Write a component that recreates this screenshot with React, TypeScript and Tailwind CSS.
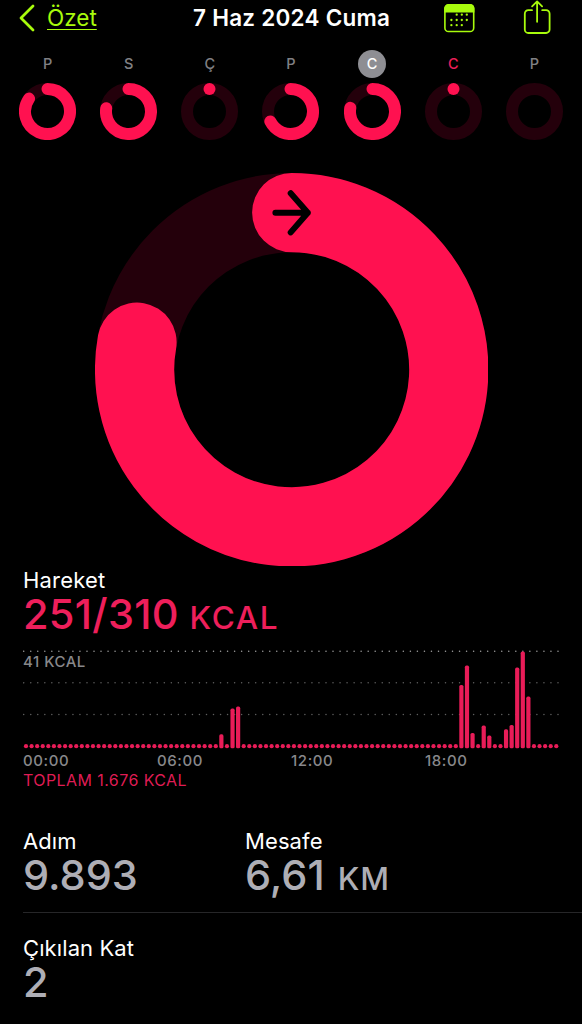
import { clsx } from 'clsx'

type Day = {
  letter: string
  /** Fraction of the move goal; null means nothing recorded yet */
  progress: number | null
  selected?: boolean
  today?: boolean
}

const DAYS: Day[] = [
  { letter: 'P', progress: 0.847 },
  { letter: 'S', progress: 0.773 },
  { letter: 'Ç', progress: 0 },
  { letter: 'P', progress: 0.677 },
  { letter: 'C', progress: 0.776, selected: true },
  { letter: 'C', progress: 0, today: true },
  { letter: 'P', progress: null },
]

// Quarter-hour slots with activity, slot index -> bar height
const BARS: Record<number, number> = {
  35: 14, 37: 39.7, 38: 41.7,
  78: 63.3, 79: 82.7, 80: 15.3, 82: 22.7, 83: 12.7,
  86: 19, 87: 23.3, 88: 80.7, 89: 96.7, 90: 51.7,
}

const HOURS = ['00:00', '06:00', '12:00', '18:00']

function Ring({ size, stroke, progress, className }: {
  size: number
  stroke: number
  progress: number | null
  className?: string
}) {
  const c = size / 2
  const r = (size - stroke) / 2
  const angle = (progress ?? 0) * Math.PI * 2
  const x = c + r * Math.sin(angle)
  const y = c - r * Math.cos(angle)

  return (
    <svg width={size} height={size} viewBox={`0 0 ${size} ${size}`} fill="none" className={className}>
      <circle cx={c} cy={c} r={r} stroke="#24000b" strokeWidth={stroke} />
      {progress === 0 && <circle cx={c} cy={c - r} r={stroke / 2} fill="#ff1150" />}
      {progress != null && progress > 0 && (
        <path
          d={`M${c} ${c - r}A${r} ${r} 0 ${progress > 0.5 ? 1 : 0} 1 ${x} ${y}`}
          stroke="#ff1150"
          strokeWidth={stroke}
          strokeLinecap="round"
        />
      )}
    </svg>
  )
}

function Header() {
  return (
    <header className="grid h-9 grid-cols-[193px_1fr_192px] items-center">
      <a className="flex items-center pl-[19px] text-[#a8fb0c]">
        <svg width="16" height="28" viewBox="0 0 16 28" fill="none" stroke="currentColor" strokeWidth="2.8" strokeLinecap="round" strokeLinejoin="round">
          <path d="M14 2L2 14L14 26" />
        </svg>
        <span className="ml-[12px] text-[22.5px] underline decoration-1 underline-offset-[3px]">Özet</span>
      </a>
      <h1 className="flex justify-center text-[22.5px] font-semibold tracking-[0.25px] whitespace-nowrap text-white">7 Haz 2024 Cuma</h1>
      <div className="flex items-start justify-end gap-[48px] self-start pr-[31px] text-[#a8fb0c]">
        <svg width="31" height="29" viewBox="0 0 31 29" fill="none" className="mt-[4px]">
          <rect x="0.9" y="0.9" width="28.8" height="26.6" rx="3.6" stroke="currentColor" strokeWidth="1.6" />
          <path d="M0.2 8.5V4.5A4.3 4.3 0 0 1 4.5 0.2H26.2A4.3 4.3 0 0 1 30.4 4.5V8.5Z" fill="currentColor" />
          <g fill="currentColor">
            {[[12.7, 10.7], [17.8, 10.7], [22.8, 10.7], [7.4, 16], [12.7, 16], [17.8, 16], [22.8, 16], [7.4, 21.2], [12.7, 21.2], [17.8, 21.2]].map(([x, y]) => (
              <circle key={`${x}-${y}`} cx={x} cy={y} r="1.15" />
            ))}
          </g>
        </svg>
        <svg width="28" height="35" viewBox="0 0 28 35" fill="none" stroke="currentColor" strokeWidth="1.8" strokeLinecap="round" strokeLinejoin="round">
          <path d="M9 10.2H5.3A3.5 3.5 0 0 0 1.8 13.7V29.5A3.5 3.5 0 0 0 5.3 33H23.1A3.5 3.5 0 0 0 26.6 29.5V13.7A3.5 3.5 0 0 0 23.1 10.2H19.2" />
          <path d="M14.1 21.8V1.6M9.1 6.4L14.1 1.4L19.1 6.4" />
        </svg>
      </div>
    </header>
  )
}

function WeekStrip() {
  return (
    <div className="mt-[14px] ml-[7px] grid w-[568px] grid-cols-7">
      {DAYS.map((day, i) => (
        <div key={i} className="flex flex-col items-center gap-[5px]">
          <span
            className={clsx(
              'flex size-7 items-center justify-center rounded-full text-[14.5px] font-medium',
              day.selected && 'bg-[#8e8e93] text-white',
              day.today && 'text-[#ea1f58]',
              !day.selected && !day.today && 'text-[#808084]',
            )}
          >
            {day.letter}
          </span>
          <Ring size={57} stroke={12} progress={day.progress} />
        </div>
      ))}
    </div>
  )
}

function HourlyChart() {
  return (
    <div className="relative mt-4">
      <svg width="536" height="99" viewBox="0 0 536 99" className="block">
        {[1.2, 32.8, 64.4].map((y, row) => (
          <g key={y} fill={row === 0 ? '#a0a0a0' : '#606060'}>
            {Array.from({ length: 77 }, (_, i) => (
              <circle key={i} cx={0.7 + i * 7.03} cy={y} r="0.75" />
            ))}
          </g>
        ))}
        {Array.from({ length: 96 }, (_, i) => {
          const h = BARS[i] ?? 4.2
          return <rect key={i} x={0.9 + i * 5.582} y={98.3 - h} width="4.2" height={h} rx={BARS[i] ? 1.6 : 2.1} fill="#e91c58" />
        })}
      </svg>
      <span className="absolute top-[2px] left-0 text-[15px] leading-[19px] font-medium tracking-[0.5px] text-[#88888b]">41 KCAL</span>
    </div>
  )
}

function Stat({ label, value, unit }: { label: string; value: string; unit?: string }) {
  return (
    <div>
      <p className="text-[22px] leading-7 tracking-[0.1px] text-white">{label}</p>
      <p className="h-10 text-[41.5px] leading-10 font-[450] text-[#aeaeb5]">
        {value}
        {unit && <span className="ml-[13px] text-[31.5px] leading-none font-medium tracking-[1px]">{unit}</span>}
      </p>
    </div>
  )
}

export default function App() {
  return (
    <main className="h-[1024px] w-[582px] overflow-hidden bg-black font-['Inter',sans-serif]">
      <Header />
      <WeekStrip />

      <div className="relative mt-[33px] flex h-[393px] justify-center pl-[0.6px]">
        <Ring size={393.4} stroke={79.2} progress={0.778} />
        <svg width="44" height="48" viewBox="0 0 44 48" fill="none" stroke="#000" strokeWidth="6" strokeLinecap="round" strokeLinejoin="round" className="absolute top-[16px] left-[270px]">
          <path d="M5.4 23.7H37.8M20.7 4.2L37.8 23.7L20.7 43.4" />
        </svg>
      </div>

      <section className="pl-[23px]">
        <p className="text-[22px] leading-7 tracking-[0.2px] text-white">Hareket</p>
        <p className="h-10 text-[41.5px] leading-10 font-[450] tracking-[0.3px] text-[#ee1f5b]">
          251/310
          <span className="ml-[10.5px] text-[31.5px] leading-none font-medium tracking-[1.7px]">KCAL</span>
        </p>
        <HourlyChart />
        <div className="mt-[2px] grid w-[536px] grid-cols-4 text-[15px] leading-5 font-medium tracking-[0.6px] text-[#88888b]">
          {HOURS.map((hour) => (
            <span key={hour}>{hour}</span>
          ))}
        </div>
        <p className="text-[16px] leading-[18px] tracking-[0.42px] text-[#df1c54]">TOPLAM 1.676 KCAL</p>
      </section>

      <section className="mt-[38px] pl-[23px]">
        <div className="grid grid-cols-[222px_1fr] border-b border-[#262628] pb-[17px]">
          <Stat label="Adım" value="9.893" />
          <Stat label="Mesafe" value="6,61" unit="KM" />
        </div>
        <div className="pt-[21px]">
          <Stat label="Çıkılan Kat" value="2" />
        </div>
      </section>
    </main>
  )
}
